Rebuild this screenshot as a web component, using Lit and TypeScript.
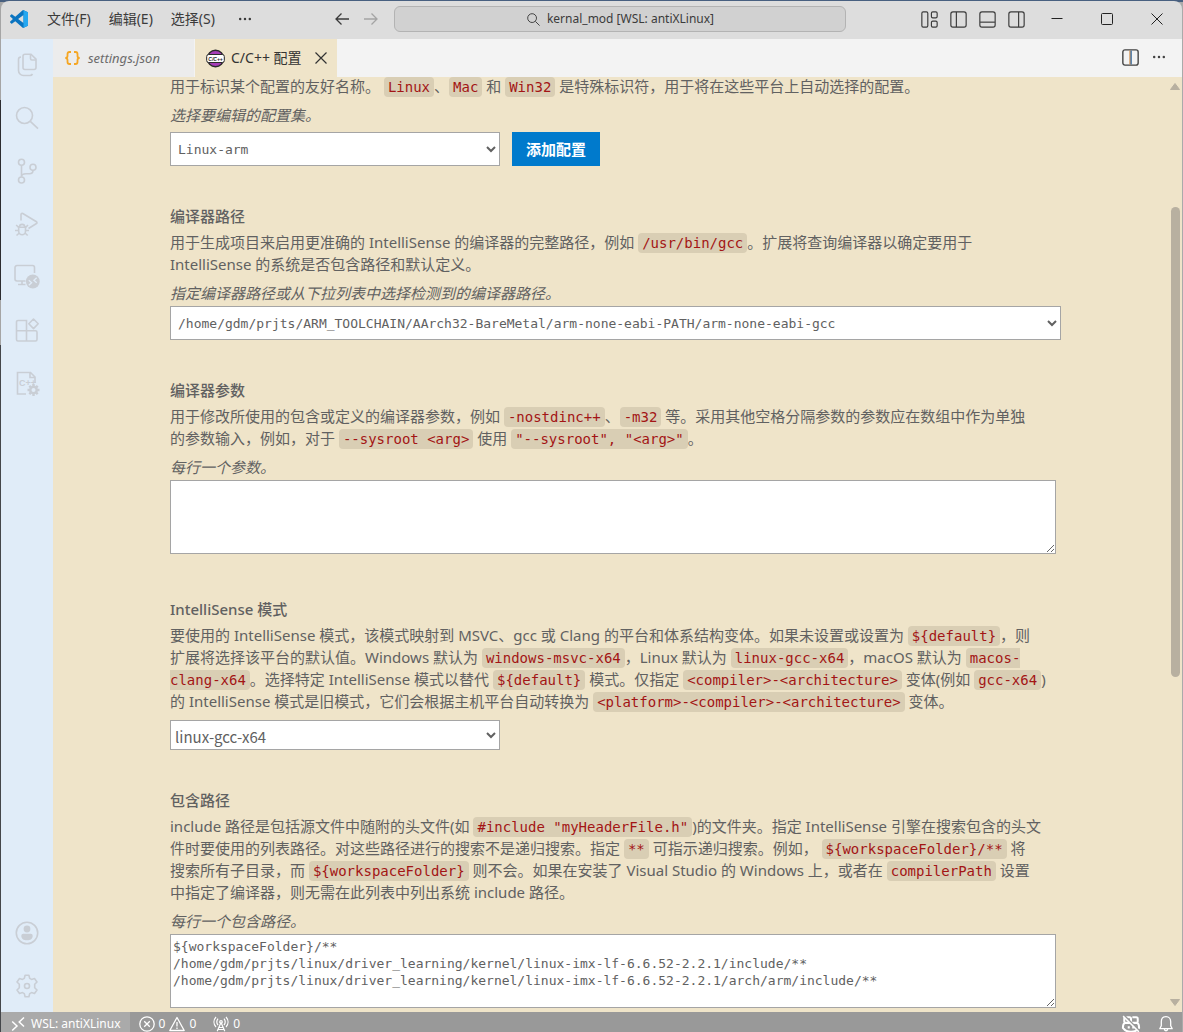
import { LitElement, html, css, svg, nothing, TemplateResult } from "lit";
import { customElement, property, state } from "lit/decorators.js";

/* ---------- icons ---------- */

const icons: Record<string, TemplateResult> = {
  files: svg`<path d="M10 1.200h6l5 5v8.300a2 2 0 0 1-2 2h-9a2 2 0 0 1-2-2V3.200a2 2 0 0 1 2-2z"/><path d="M15.500 1.500v4a1.500 1.500 0 0 0 1.500 1.500h4"/><path d="M6 4a2.500 2.500 0 0 0-2.500 2.500V17.500a5 5 0 0 0 5 5h6.500a3 3 0 0 0 2.500-1.500"/>`,
  search: svg`<circle cx="9.500" cy="9.500" r="8"/><path d="M15.300 15.300l7.700 7.400"/>`,
  git: svg`<circle cx="6.500" cy="3.200" r="3"/><circle cx="6.500" cy="21" r="3"/><circle cx="18" cy="8.200" r="3"/><path d="M6.500 6.300v11.500M18 11.300c0 2.500-1.500 3.500-3.500 3.500H11c-2.500 0-4.500 1-4.500 3"/>`,
  debug: svg`<path d="M6 8.500V2.500a1.200 1.200 0 0 1 1.800-1L21.500 9.800a1 1 0 0 1 0 1.700L13.500 16.500"/><path d="M3.700 15.300h6.800v4a3.400 3.400 0 0 1-6.800 0z"/><path d="M4.500 15c0-3.500 5.200-3.500 5.200 0M3.700 15.500L1.200 13M10.500 15.500L13 13M3.500 18.500H0M14 18.500h-3.500M4.300 21L1.500 23.500M10 21l2.700 2.500"/>`,
  remote: svg`<path d="M10.500 16H2a2 2 0 0 1-2-2V2.500a2 2 0 0 1 2-2h15.500a2 2 0 0 1 2 2V8M3 19.500h7.500M7 16v3.500"/><circle cx="17.800" cy="16.500" r="6.900" fill="currentColor" stroke="none"/><path d="M13.800 15.200l2.800 2.500-2.800 2.500M21.700 12.800l-2.800 2.500 2.800 2.500" stroke="#e0ecf8" stroke-width="1.300"/>`,
  extensions: svg`<path d="M1.500 4a1.500 1.500 0 0 1 1.500-1.500h8.500v20.500H3A1.500 1.500 0 0 1 1.500 21.500zM1.500 12.800H20.500a1.500 1.500 0 0 1 1.500 1.500V21.500a1.500 1.500 0 0 1-1.500 1.500h-9"/><path d="M18.500 1l4.700 4.800-4.700 4.800-4.700-4.800z" stroke-linejoin="round"/>`,
  cpp: svg`<path d="M11 23H2.500V1.500h13L20 6v6M15 1.500V6.500h5"/><text x="4" y="14.500" font-size="9" font-weight="700" font-family="Liberation Sans, sans-serif" fill="currentColor" stroke="none">C++</text><circle cx="18.500" cy="19" r="3.200" stroke-width="2.400"/><path d="M18.500 13v2.500M18.500 22.500v2.500M12.500 19h2.500M22 19h2.500M14.300 14.800l1.800 1.800M20.900 21.400l1.800 1.800M22.700 14.800l-1.800 1.800M16.100 21.400l-1.800 1.800" stroke-width="2.400"/>`,
  account: svg`<circle cx="12" cy="12" r="10.700"/><circle cx="12" cy="8" r="3.400" fill="currentColor" stroke="none"/><path d="M8.300 12.700h7.400a2 2 0 0 1 2 2c0 3-2.300 4.600-5.700 4.600s-5.700-1.600-5.700-4.600a2 2 0 0 1 2-2z" fill="currentColor" stroke="none"/>`,
  gear: svg`<circle cx="12" cy="12" r="2.500"/><path d="M10.100 1.300h3.800l.8 3.100 1.800 1 3-.9 2.500 3.500-2.300 2.300v3.400l2.300 2.300-2.500 3.500-3-.9-1.800 1-.8 3.100h-3.800l-.8-3.100-1.800-1-3 .9L2 16l2.300-2.300v-3.400L2 8l2.500-3.500 3 .9 1.800-1z" stroke-linejoin="round"/>`,
  back: svg`<path d="M15 8H2M7.500 2.500L2 8l5.500 5.500"/>`,
  forward: svg`<path d="M1 8h13M8.500 2.500L14 8l-5.500 5.500"/>`,
  find: svg`<circle cx="6.500" cy="6.500" r="4.700"/><path d="M10 10l4.500 4.500"/>`,
  more: svg`<g fill="currentColor" stroke="none"><circle cx="2.500" cy="8" r="1.400"/><circle cx="8" cy="8" r="1.400"/><circle cx="13.500" cy="8" r="1.400"/></g>`,
  layout: svg`<rect x=".8" y=".8" width="5.600" height="14.400" rx="1.300"/><rect x="9.800" y=".8" width="5.400" height="5.600" rx="1.300"/><rect x="9.800" y="9.600" width="5.400" height="5.600" rx="1.300"/>`,
  sideLeft: svg`<rect x=".8" y=".8" width="14.400" height="14.400" rx="2"/><path d="M6 1v14"/>`,
  panel: svg`<rect x=".8" y=".8" width="14.400" height="14.400" rx="2"/><path d="M1 10.500h14"/>`,
  sideRight: svg`<rect x=".8" y=".8" width="14.400" height="14.400" rx="2"/><path d="M10 1v14"/>`,
  split: svg`<rect x=".8" y=".8" width="14.400" height="14.400" rx="2"/><path d="M7.600 1.500v13" stroke="#d18a45"/><path d="M8.600 1.500v13" stroke="#3f6f9f"/>`,
  minimize: svg`<path d="M2.500 7.500h11"/>`,
  maximize: svg`<rect x="2.500" y="2.500" width="11" height="11" rx="1"/>`,
  close: svg`<path d="M2.500 2.500l11 11M13.500 2.500l-11 11"/>`,
  wsl: svg`<path d="M2.200 5.500L7 10l-4.800 4.500M14 1.500L9.200 6 14 10.500"/>`,
  error: svg`<circle cx="8" cy="8" r="7.200"/><path d="M5.200 5.200l5.600 5.600M10.800 5.200l-5.600 5.600"/>`,
  warning: svg`<path d="M8 1.500l7.200 13H.8z" stroke-linejoin="round"/><path d="M8 6v4.500M8 11.500v1.500"/>`,
  broadcast: svg`<path d="M8 6.500l-3.800 8.700M8 6.500l3.800 8.700M6 11.500h4M5 13.500h6"/><circle cx="8" cy="6" r="1.300"/><path d="M3 1C.3 4 .3 8 3 11M13 1c2.700 3 2.700 7 0 10M5 2.700c-1.500 2-1.500 4.500 0 6.500M11 2.700c1.500 2 1.500 4.500 0 6.500"/>`,
  copilot: svg`<path d="M3.200 2h3.600q1.200 0 1.200 1.500v2.300Q8 7 6.500 7H3.300Q2 7 2 5.800V3.500Q2 2 3.200 2zM9.200 2h3.600Q14 2 14 3.500v2.300q0 1.200-1.300 1.200H9.500Q8 7 8 5.800M2.500 7C.8 7.800.8 9 .8 11.500 2.500 13.800 5 15 8 15s5.500-1.200 7.200-3.500c0-2.500 0-3.700-1.700-4.500M6 10v2M10 10v2" stroke-width="1.800"/><path d="M2 .8L15.500 14.300" stroke="#999" stroke-width="2"/><path d="M1 1l14 14" stroke-width="1.300"/>`,
  bell: svg`<path d="M8 .7c-3 0-4.700 2.200-4.700 5v4L1.800 12.700h12.400L12.700 9.700v-4C12.700 2.900 11 .7 8 .7zM6.300 13c.2 2.300 3.200 2.300 3.400 0" stroke-linejoin="round"/>`,
};

@customElement("ui-icon")
export class UiIcon extends LitElement {
  @property() name = "";
  @property({ type: Number }) size = 16;
  @property({ type: Number }) grid = 16;
  @property({ type: Number }) weight = 1;

  static styles = css`
    :host { display: inline-flex; flex: none; }
    svg { display: block; overflow: visible; }
  `;

  render() {
    return html`<svg width=${this.size} height=${this.size} viewBox="0 0 ${this.grid} ${this.grid}"
      fill="none" stroke="currentColor" stroke-width=${this.weight} aria-hidden="true">${icons[this.name] ?? nothing}</svg>`;
  }
}

/* ---------- shared pieces ---------- */

const uiFont = css`"Noto Sans", "Noto Sans CJK SC", sans-serif`;
const monoFont = css`"DejaVu Sans Mono", "Liberation Mono", "Noto Sans CJK SC", monospace`;

const c = (t: string) => html`<code>${t}</code>`;

@customElement("title-bar")
export class TitleBar extends LitElement {
  static styles = css`
    :host { display: grid; grid-template-columns: 1fr minmax(200px, 452px) auto; align-items: center; box-sizing: border-box; height: 38px; padding-bottom: 2px;
      background: #ddd; color: #3b3b3b; font: 14px/20px ${uiFont}; border-radius: 8px 8px 0 0; }
    button { border: 0; padding: 0; background: none; color: inherit; font: inherit; display: inline-flex; align-items: center; justify-content: center; }
    .left, .menus, .right, .nav, .layouts { display: flex; align-items: center; }
    .logo { margin: 0 19px 0 9px; flex: none; }
    .menus { gap: 18px; white-space: nowrap; }
    .dots { margin-left: 5px; }
    .nav { gap: 13px; margin-left: auto; padding-right: 15px; }
    .off { color: #a4a4a4; }
    .center { height: 26px; border: 1px solid #b3b3b3; border-radius: 6px; background: #d1d1d1; gap: 6px; font-size: 12px; white-space: nowrap; }
    .right { justify-content: flex-end; padding-left: 75px; }
    .layouts { gap: 12px; margin-right: 7px; }
    .win { width: 50px; height: 36px; color: #222; }
  `;
  render() {
    return html`
      <div class="left">
        <svg class="logo" width="18" height="18" viewBox="0 0 24 24" aria-hidden="true">
          <path fill="#0a74c0" d="M23.150 2.587L18.210.210a1.494 1.494 0 0 0-1.705.290l-9.460 8.630-4.120-3.128a.999.999 0 0 0-1.276.057L.327 7.261A1 1 0 0 0 .326 8.740L3.899 12 .326 15.260a1 1 0 0 0 .001 1.479L1.650 17.940a.999.999 0 0 0 1.276.057l4.120-3.128 9.460 8.630a1.492 1.492 0 0 0 1.704.290l4.942-2.377A1.500 1.500 0 0 0 24 20.060V3.939a1.500 1.500 0 0 0-.850-1.352zm-5.146 14.861L10.826 12l7.178-5.448v10.896z"/>
          <path fill="#25a7f0" d="M18 .2l5.150 2.387A1.500 1.500 0 0 1 24 3.940v16.120a1.500 1.500 0 0 1-.85 1.352L18 23.800z"/>
        </svg>
        <nav class="menus" aria-label="菜单">
          <button>文件(F)</button><button>编辑(E)</button><button>选择(S)</button>
          <button class="dots" aria-label="更多"><ui-icon name="more" size="14" weight="1"></ui-icon></button>
        </nav>
        <div class="nav">
          <button aria-label="后退"><ui-icon name="back" weight="1.3"></ui-icon></button>
          <button class="off" aria-label="前进"><ui-icon name="forward" weight="1.3"></ui-icon></button>
        </div>
      </div>
      <button class="center"><ui-icon name="find" size="15"></ui-icon><span>kernal_mod [WSL: antiXLinux]</span></button>
      <div class="right">
        <div class="layouts">
          ${["layout", "sideLeft", "panel", "sideRight"].map(
            (n) => html`<button aria-label=${n}><ui-icon name=${n} size="17" weight="1.1"></ui-icon></button>`)}
        </div>
        ${["minimize", "maximize", "close"].map(
          (n) => html`<button class="win" aria-label=${n}><ui-icon name=${n}></ui-icon></button>`)}
      </div>`;
  }
}

@customElement("activity-bar")
export class ActivityBar extends LitElement {
  static styles = css`
    :host { display: flex; flex-direction: column; width: 52px; background: #e0ecf8; color: #c9ced5; }
    button { border: 0; padding: 0; background: none; color: inherit; width: 100%; height: 53px; flex: none; display: flex; align-items: center; justify-content: center; }
    .top { margin: -1px 0 auto; }
  `;
  item(name: string) {
    return html`<button aria-label=${name}><ui-icon name=${name} size="24" grid="24" weight="1.6"></ui-icon></button>`;
  }
  render() {
    return html`
      <div class="top">${["files", "search", "git", "debug", "remote", "extensions", "cpp"].map((n) => this.item(n))}</div>
      ${this.item("account")}${this.item("gear")}`;
  }
}

@customElement("editor-tabs")
export class EditorTabs extends LitElement {
  static styles = css`
    :host { display: flex; align-items: stretch; height: 38px; background: #f3f3f3; font: 14px/20px ${uiFont}; color: #333; }
    .tab { display: flex; align-items: center; box-sizing: border-box; width: 142px; white-space: nowrap; }
    .tab a { color: inherit; text-decoration: none; }
    .json { background: #ececec; color: #6b6b6b; font-style: italic; font-size: 13px; padding-left: 11px; gap: 7px; border-right: 1px solid #f3f3f3; }
    .cpp { background: #efe4c9; padding-left: 11px; gap: 6px; }
    .actions { margin-left: auto; display: flex; align-items: center; gap: 13px; padding: 0 16px 2px 0; color: #424242; }
    button { border: 0; padding: 0; background: none; color: inherit; display: flex; }
    .shut { margin-left: auto; margin-right: 8px; }
  `;
  render() {
    return html`
      <div class="tab json">
        <svg width="17" height="16" viewBox="0 0 17 16" fill="none" stroke="#f5a623" stroke-width="1.800" aria-hidden="true">
          <path d="M7 2H5.500Q3.500 2 3.500 4v2q0 2-2.200 2 2.200 0 2.200 2v2q0 2 2 2H7M10 2h1.500q2 0 2 2v2q0 2 2.200 2-2.200 0-2.200 2v2q0 2-2 2H10"/>
        </svg>
        <a href="#settings">settings.json</a>
      </div>
      <div class="tab cpp">
        <svg width="19" height="19" viewBox="0 0 19 19" aria-hidden="true">
          <circle cx="9.500" cy="9.500" r="8.300" fill="#a63db8" stroke="#2b2b2b" stroke-width="1.400"/>
          <rect x=".7" y="5.500" width="17.600" height="8" rx="2" fill="#fff" stroke="#2b2b2b"/>
          <text x="9.500" y="11.500" font-size="5" font-weight="700" font-style="italic" text-anchor="middle" font-family="Liberation Sans, sans-serif" fill="#222">C/C++</text>
        </svg>
        <a href="#config">C/C++ 配置</a>
        <button class="shut" aria-label="关闭"><ui-icon name="close" weight="1.2"></ui-icon></button>
      </div>
      <div class="actions">
        <button aria-label="拆分编辑器"><ui-icon name="split" size="17" weight="1.3"></ui-icon></button>
        <button aria-label="更多操作"><ui-icon name="more" size="14"></ui-icon></button>
      </div>`;
  }
}

@customElement("status-bar")
export class StatusBar extends LitElement {
  static styles = css`
    :host { display: flex; box-sizing: border-box; height: 20px; background: #999; color: #fff; font: 12px/17px ${uiFont}; overflow: hidden; white-space: nowrap; }
    button { border: 0; padding: 3px 0 0; background: none; color: inherit; font: inherit; display: flex; align-items: center; gap: 4px; }
    .host { background: #aaa; padding-left: 9px; padding-right: 9px; }
    .host ui-icon { margin-right: 1px; }
    .problems { margin-left: 9px; }
    .ports { margin-left: 17px; }
    .end { margin-left: auto; display: flex; gap: 18px; padding-right: 8px; }
  `;
  render() {
    return html`
      <button class="host"><ui-icon name="wsl" weight="1.5"></ui-icon><span>WSL: antiXLinux</span></button>
      <button class="problems"><ui-icon name="error" weight="1.3"></ui-icon><span>0</span><ui-icon name="warning" weight="1.3"></ui-icon><span>0</span></button>
      <button class="ports"><ui-icon name="broadcast" weight="1.2"></ui-icon><span>0</span></button>
      <div class="end">
        <button aria-label="Copilot"><ui-icon name="copilot" size="18"></ui-icon></button>
        <button aria-label="通知"><ui-icon name="bell" weight="1.3"></ui-icon></button>
      </div>`;
  }
}

@customElement("config-form")
export class ConfigForm extends LitElement {
  @state() includes = [
    "${workspaceFolder}/**",
    "/home/gdm/prjts/linux/driver_learning/kernel/linux-imx-lf-6.6.52-2.2.1/include/**",
    "/home/gdm/prjts/linux/driver_learning/kernel/linux-imx-lf-6.6.52-2.2.1/arch/arm/include/**",
  ].join("\n");

  static styles = css`
    :host { display: block; min-width: 0; overflow: hidden; color: #616161; font: 15px/22px ${uiFont}; }
    form { display: flex; flex-direction: column; gap: 39px; margin-top: -2px; padding: 0 107px 0 117px; white-space: nowrap; }
    section { display: flex; flex-direction: column; }
    p { margin: 0; }
    .name { font-weight: 500; margin-bottom: 4px; }
    .hint { font-style: italic; margin: 7px 0 2px; }
    code { font: 14px/17px ${monoFont}; color: #a31515; background: #d9ceb4; border-radius: 4px; padding: 2px 4px; }
    select { box-sizing: border-box; height: 34px; border: 1px solid #a5a5a5; border-radius: 0; background-color: #fff; color: #616161; font: 13px/17px ${monoFont}; padding: 0 3px; width: 100%; }
    textarea { box-sizing: border-box; display: block; height: 74px; margin: 0 5px 5px 0; border: 1px solid #a5a5a5; background: #fff; color: #616161; font: 13px/17px ${monoFont}; padding: 3px 2px; resize: both; white-space: pre; overflow: hidden; }
    .row { display: flex; gap: 12px; margin-top: 4px; }
    select.short { width: 330px; }
    select.plain { height: 30px; margin-top: 8px; font: 15px/22px "Noto Sans CJK SC", sans-serif; padding: 2px 0 0; }
    .add { border: 0; background: #007acc; color: #fff; font: 600 15px/22px ${uiFont}; padding: 0 14px; }
  `;

  render() {
    return html`<form @submit=${(e: Event) => e.preventDefault()}>
      <section>
        <p>用于标识某个配置的友好名称。 ${c("Linux")}、${c("Mac")} 和 ${c("Win32")} 是特殊标识符，用于将在这些平台上自动选择的配置。</p>
        <label class="hint" for="set">选择要编辑的配置集。</label>
        <div class="row">
          <select id="set" class="short"><option>Linux-arm</option></select>
          <button class="add" type="button">添加配置</button>
        </div>
      </section>
      <section>
        <label class="name" for="compiler">编译器路径</label>
        <p>用于生成项目来启用更准确的 IntelliSense 的编译器的完整路径，例如 ${c("/usr/bin/gcc")}。扩展将查询编译器以确定要用于<br>IntelliSense 的系统是否包含路径和默认定义。</p>
        <p class="hint">指定编译器路径或从下拉列表中选择检测到的编译器路径。</p>
        <select id="compiler"><option>/home/gdm/prjts/ARM_TOOLCHAIN/AArch32-BareMetal/arm-none-eabi-PATH/arm-none-eabi-gcc</option></select>
      </section>
      <section>
        <label class="name" for="args">编译器参数</label>
        <p>用于修改所使用的包含或定义的编译器参数，例如 ${c("-nostdinc++")}、${c("-m32")} 等。采用其他空格分隔参数的参数应在数组中作为单独<br>的参数输入，例如，对于 ${c("--sysroot <arg>")} 使用 ${c('"--sysroot", "<arg>"')}。</p>
        <p class="hint">每行一个参数。</p>
        <textarea id="args"></textarea>
      </section>
      <section>
        <label class="name" for="mode">IntelliSense 模式</label>
        <p>要使用的 IntelliSense 模式，该模式映射到 MSVC、gcc 或 Clang 的平台和体系结构变体。如果未设置或设置为 ${c("${default}")}，则<br>扩展将选择该平台的默认值。Windows 默认为 ${c("windows-msvc-x64")}，Linux 默认为 ${c("linux-gcc-x64")}，macOS 默认为 <code>macos-<br>clang-x64</code>。选择特定 IntelliSense 模式以替代 ${c("${default}")} 模式。仅指定 ${c("<compiler>-<architecture>")} 变体(例如 ${c("gcc-x64")})<br>的 IntelliSense 模式是旧模式，它们会根据主机平台自动转换为 ${c("<platform>-<compiler>-<architecture>")} 变体。</p>
        <select id="mode" class="short plain"><option>linux-gcc-x64</option></select>
      </section>
      <section>
        <label class="name" for="includes">包含路径</label>
        <p>include 路径是包括源文件中随附的头文件(如 ${c('#include "myHeaderFile.h"')})的文件夹。指定 IntelliSense 引擎在搜索包含的头文<br>件时要使用的列表路径。对这些路径进行的搜索不是递归搜索。指定 ${c("**")} 可指示递归搜索。例如， ${c("${workspaceFolder}/**")} 将<br>搜索所有子目录，而 ${c("${workspaceFolder}")} 则不会。如果在安装了 Visual Studio 的 Windows 上，或者在 ${c("compilerPath")} 设置<br>中指定了编译器，则无需在此列表中列出系统 include 路径。</p>
        <p class="hint">每行一个包含路径。</p>
        <textarea id="includes" .value=${this.includes}></textarea>
      </section>
    </form>`;
  }
}

@customElement("app-root")
export class AppRoot extends LitElement {
  static styles = css`
    :host { display: block; }
    .frame { display: grid; grid-template-rows: auto minmax(0, 1fr) auto; box-sizing: border-box; height: 100vh; padding: 1px 1px 0; overflow: hidden;
      background:
        linear-gradient(#486080, #486080) 0 0 / 100% 2px no-repeat,
        linear-gradient(#a5a5a5 100px, #2c2c30 100px 300px, #a5a5a5 300px 345px, #44464a 345px) 0 0 / 1px 100% no-repeat,
        #aaa; }
    .work { display: grid; grid-template-columns: auto minmax(0, 1fr); min-height: 0; }
    .editor { display: flex; flex-direction: column; min-width: 0; min-height: 0; background: #efe4c9; }
    .view { display: grid; grid-template-columns: minmax(0, 1fr) 14px; flex: 1; min-height: 0; }
    .bar { display: flex; flex-direction: column; align-items: center; color: #b8b0a0; padding: 6px 0; }
    .lead { flex: 117; }
    .thumb { flex: 470; width: 9px; border-radius: 5px; background: #b8b0a0; }
    .rest { flex: 322; }
  `;
  render() {
    return html`<div class="frame">
      <title-bar></title-bar>
      <div class="work">
        <activity-bar></activity-bar>
        <div class="editor">
          <editor-tabs></editor-tabs>
          <div class="view">
            <config-form></config-form>
            <div class="bar">
              <svg width="10" height="7" viewBox="0 0 10 7" aria-hidden="true"><path d="M5 0.500L9.500 6.500H.5z" fill="currentColor" stroke="currentColor" stroke-linejoin="round"/></svg>
              <div class="lead"></div><div class="thumb"></div><div class="rest"></div>
              <svg width="10" height="7" viewBox="0 0 10 7" aria-hidden="true"><path d="M5 6.500L9.500 .5H.5z" fill="currentColor" stroke="currentColor" stroke-linejoin="round"/></svg>
            </div>
          </div>
        </div>
      </div>
      <status-bar></status-bar>
    </div>`;
  }
}
